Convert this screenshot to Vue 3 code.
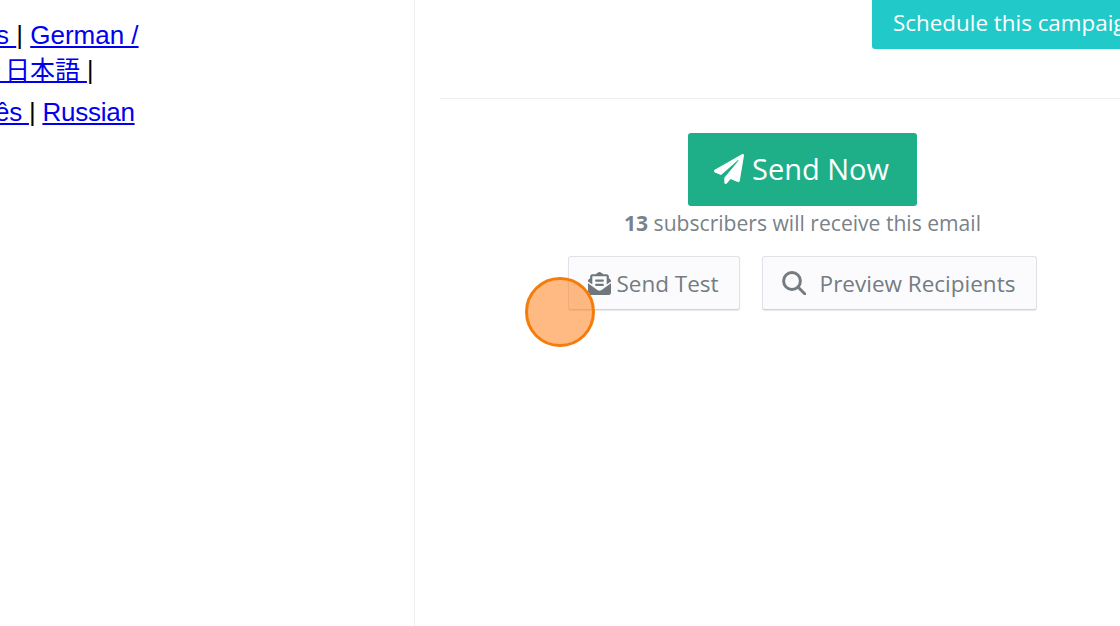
<script setup>
const lines = [
  { id: 1, parts: [{ text: 's ', link: true }, { text: '| ' }, { text: 'German /', link: true }] },
  { id: 2, parts: [{ text: ' 日本語 ', link: true }, { text: '|' }] },
  { id: 3, parts: [{ text: 'ês ', link: true }, { text: '| ' }, { text: 'Russian', link: true }] }
]
</script>

<template>
  <div class="page">
    <aside class="languages">
      <p v-for="line in lines" :key="line.id" :class="['lang-line', 'lang-line-' + line.id]">
        <template v-for="(part, i) in line.parts" :key="i">
          <a v-if="part.link" href="#" class="lang-link">{{ part.text }}</a>
          <span v-else>{{ part.text }}</span>
        </template>
      </p>
    </aside>
    <main class="content">
      <div class="top-bar">
        <button class="schedule">Schedule this campaign</button>
      </div>
      <div class="send-area">
        <button class="send-now">
          <svg class="plane" viewBox="0 0 512 512"><path d="M476 3.2L12.5 270.6c-18.1 10.4-15.8 35.6 2.2 43.2L121 358.4l287.3-253.2c5.5-4.9 13.3 2.6 8.6 8.3L176 407v80.5c0 23.6 28.5 32.9 42.5 15.8L282 426l124.6 52.2c14.2 6 30.4-2.9 33-18.2l72-432C515 7.8 493.3-6.8 476 3.2z"/></svg>
          Send Now
        </button>
        <p class="note"><b>13</b> subscribers will receive this email</p>
        <div class="actions">
          <button class="ghost ghost-test">
            <svg class="icon-mail" viewBox="0 0 512 512"><path d="M176 216h160c8.84 0 16-7.16 16-16v-16c0-8.84-7.16-16-16-16H176c-8.84 0-16 7.16-16 16v16c0 8.84 7.16 16 16 16zm-16 80c0 8.84 7.16 16 16 16h160c8.84 0 16-7.16 16-16v-16c0-8.84-7.16-16-16-16H176c-8.84 0-16 7.16-16 16v16zm96 121.13c-16.42 0-32.84-5.06-46.86-15.19L0 250.86V464c0 26.51 21.49 48 48 48h416c26.51 0 48-21.49 48-48V250.86L302.86 401.94c-14.02 10.12-30.44 15.19-46.86 15.19zm237.61-254.18c-8.85-6.94-17.24-13.47-29.61-22.81V96c0-26.51-21.49-48-48-48h-77.55c-3.04-2.2-5.87-4.26-9.04-6.56C312.6 29.17 279.2-.35 256 0c-23.2-.35-56.59 29.17-71.41 41.44-3.17 2.3-6 4.36-9.04 6.56H96c-26.51 0-48 21.49-48 48v44.14c-12.37 9.33-20.76 15.87-29.61 22.81A47.995 47.995 0 0 0 0 200.72v10.65l96 69.35V96h320v184.72l96-69.35v-10.65c0-14.74-6.78-28.67-18.39-37.77z"/></svg>
            Send Test
          </button>
          <button class="ghost ghost-preview">
            <svg class="icon-search" viewBox="0 0 24 24"><circle cx="10" cy="10" r="8.4"/><line x1="16.2" y1="16.2" x2="23" y2="23"/></svg>
            Preview Recipients
          </button>
        </div>
      </div>
    </main>
    <div class="cursor-dot"></div>
  </div>
</template>

<style>
html, body { margin: 0; overflow: hidden; background: #fff; }
</style>

<style scoped>
.page {
  position: relative;
  display: flex;
  width: 1120px;
  height: 626px;
  overflow: hidden;
  background: #fff;
}
.languages {
  flex: 0 0 415px;
  box-sizing: border-box;
  height: 626px;
  padding-top: 20px;
  border-right: 1px solid #eceef1;
  overflow: hidden;
  font: 26px "Liberation Sans", "Noto Sans CJK JP", sans-serif;
  color: #000;
}
.lang-line { margin: 0; white-space: pre; line-height: 30px; }
.lang-line-1 { margin-left: -4px; }
.lang-line-2 { margin-top: 5px; margin-left: -2px; font-size: 25px; }
.lang-line-3 { margin-top: 12px; margin-left: -5px; letter-spacing: -0.25px; }
.lang-link { color: #0000ee; text-decoration: underline; }
.content {
  flex: 0 0 725px;
  margin-left: 25px;
  font-family: "Open Sans", sans-serif;
}
.top-bar {
  display: flex;
  justify-content: flex-end;
  height: 98px;
  box-sizing: content-box;
  border-bottom: 1px solid #eceef1;
}
.schedule {
  align-self: flex-start;
  width: 293px;
  height: 49px;
  padding: 0 0 5px 21px;
  border: 0;
  border-radius: 0 0 3px 3px;
  background: #22c9c9;
  color: #fff;
  font: 22.4px "Open Sans", sans-serif;
  text-align: left;
  white-space: nowrap;
  overflow: hidden;
}
.send-area {
  display: flex;
  flex-direction: column;
  align-items: center;
  padding-top: 34px;
}
.send-now {
  display: flex;
  align-items: center;
  justify-content: center;
  gap: 8px;
  width: 229px;
  height: 73px;
  padding: 0 2px 2px 0;
  border: 0;
  border-radius: 3px;
  background: #1eaf89;
  color: #fff;
  font: 29px "Open Sans", sans-serif;
}
.plane { width: 30px; height: 30px; fill: #fff; }
.note {
  margin: 2px 0 0;
  font-size: 21.1px;
  line-height: 29px;
  color: #7a8288;
}
.note b { font-weight: 700; }
.actions {
  display: flex;
  gap: 22px;
  margin-top: 19px;
}
.ghost {
  display: flex;
  align-items: center;
  justify-content: center;
  box-sizing: border-box;
  height: 54px;
  padding: 0;
  border: 1px solid #dfe2e6;
  border-bottom-color: #cfd4d9;
  border-radius: 3px;
  background: #fbfbfd;
  box-shadow: 0 1px 1px rgba(120, 130, 140, 0.18);
  color: #747c82;
  font: 22.5px "Open Sans", sans-serif;
  white-space: nowrap;
}
.ghost-test { width: 172px; gap: 5px; padding-right: 1px; }
.ghost-preview { width: 275px; gap: 14px; padding-right: 2px; }
.icon-mail { width: 23px; height: 23px; fill: #6f777d; }
.icon-search { width: 24px; height: 24px; fill: none; stroke: #747c82; stroke-width: 3; stroke-linecap: round; }
.cursor-dot {
  position: absolute;
  left: 525px;
  top: 277px;
  box-sizing: border-box;
  width: 70px;
  height: 70px;
  border: 3px solid #f57c0a;
  border-radius: 50%;
  background: rgba(255, 125, 20, 0.53);
}
</style>
